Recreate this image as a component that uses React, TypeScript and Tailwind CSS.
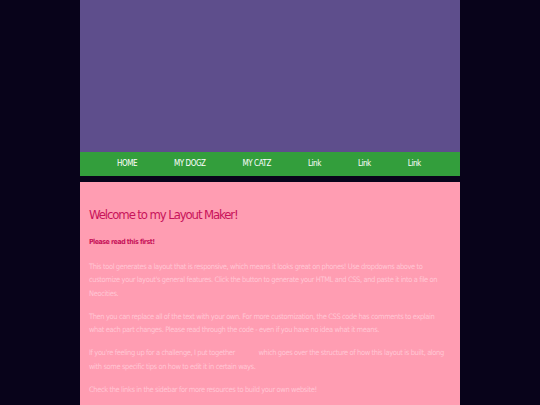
const NAV = ['HOME', 'MY DOGZ', 'MY CATZ', 'Link', 'Link', 'Link']

const FONT = { fontFamily: '"DejaVu Sans Condensed", "DejaVu Sans", sans-serif', fontStretch: 'condensed' }

export default function App() {
  return (
    <div className="min-h-[405px] bg-[#08031a]" style={FONT}>
      <div className="w-[380px] mx-auto">
        {/* banner */}
        <div className="h-[152px] bg-[#5e4e8c]" />
        {/* nav */}
        <nav className="h-[24px] bg-[#339e3c] flex items-center pl-[37px] gap-[37px] whitespace-nowrap">
          {NAV.map((label, i) => (
            <a key={i} href="#" className="text-[8px] tracking-[-0.45px] text-white">
              {label}
            </a>
          ))}
        </nav>
        <div className="h-[6px]" />
        {/* content */}
        <main className="bg-[#ff9db2] px-[9px] pt-[24px] pb-4">
          <h1 className="text-[13px] leading-[18px] tracking-[-1.1px] text-[#c8135a]">Welcome to my Layout Maker!</h1>
          <p className="mt-[12px] text-[7px] leading-[13.5px] tracking-[-0.5px] font-bold text-[#c8135a]">
            Please read this first!
          </p>
          <div className="mt-[10px] flex flex-col gap-[9.5px] text-[7.5px] leading-[13.5px] tracking-[-0.4px] text-[#ffc6d4]">
            <p>
              This tool generates a layout that is responsive, which means it looks great on phones! Use dropdowns above to
              customize your layout's general features. Click the button to generate your HTML and CSS, and paste it into a
              file on Neocities.
            </p>
            <p>
              Then you can replace all of the text with your own. For more customization, the CSS code has comments to explain
              what each part changes. Please read through the code - even if you have no idea what it means.
            </p>
            <p>
              If you're feeling up for a challenge, I put together <span className="inline-block w-[20px]" /> which goes
              over the structure of how this layout is built, along with some specific tips on how to edit it in certain ways.
            </p>
            <p>Check the links in the sidebar for more resources to build your own website!</p>
          </div>
        </main>
      </div>
    </div>
  )
}
